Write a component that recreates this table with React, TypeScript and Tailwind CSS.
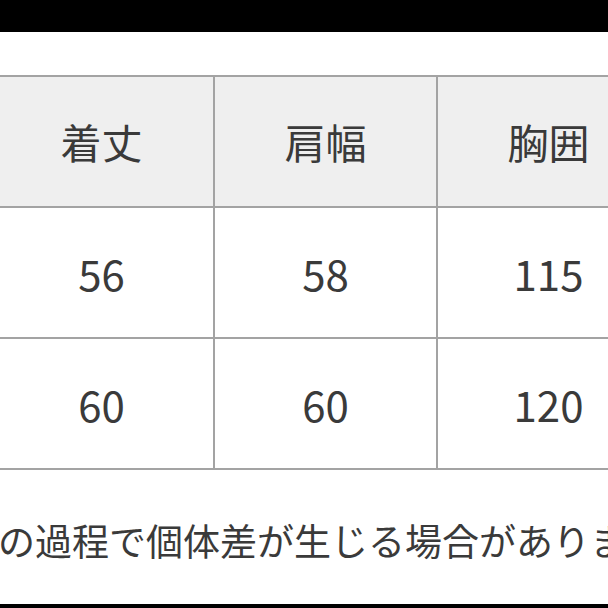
const header = ["着丈", "肩幅", "胸囲"];
const rows = [
  ["56", "58", "115"],
  ["60", "60", "120"],
];

export default function App() {
  return (
    <div
      className="w-[608px] h-[608px] overflow-hidden bg-white flex flex-col text-[#3a3a3a]"
      style={{ fontFamily: '"Noto Sans CJK JP", "Noto Sans", sans-serif' }}
    >
      <div className="h-[32px] bg-black shrink-0" />
      <div className="h-[43px] shrink-0" />
      <div className="ml-[-10px] border-t-2 border-[#a3a3a3] w-[700px] shrink-0">
        <div className="grid grid-cols-[225px_223px_223px] h-[131px] bg-[#efefef] border-b-2 border-[#a3a3a3]">
          {header.map((h) => (
            <div key={h} className="flex items-center justify-center border-r-2 border-[#a3a3a3] text-[41px] leading-none">
              {h}
            </div>
          ))}
        </div>
        {rows.map((r, i) => (
          <div key={i} className="grid grid-cols-[225px_223px_223px] h-[131px] bg-white border-b-2 border-[#a3a3a3]">
            {r.map((v, j) => (
              <div key={j} className="flex items-center justify-center border-r-2 border-[#a3a3a3] text-[42px] leading-none">
                {v}
              </div>
            ))}
          </div>
        ))}
      </div>
      <div className="flex-1 flex items-center whitespace-nowrap overflow-hidden">
        <span className="text-[37px] leading-none ml-[-2px] pt-[6px]">の過程で個体差が生じる場合がありま</span>
      </div>
      <div className="h-[4px] bg-black shrink-0" />
    </div>
  );
}
